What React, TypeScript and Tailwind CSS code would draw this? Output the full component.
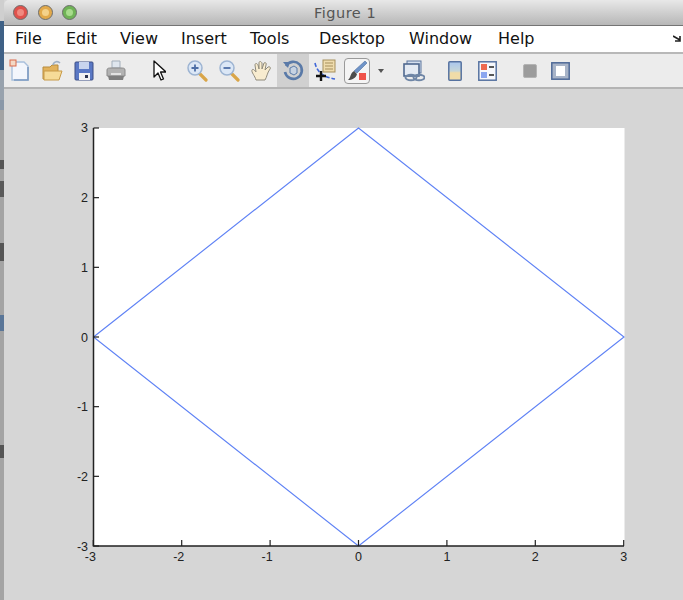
import type { ReactNode } from "react";

const menus = [
  { label: "File", w: "w-[51px]" },
  { label: "Edit", w: "w-[54px]" },
  { label: "View", w: "w-[61px]" },
  { label: "Insert", w: "w-[69px]" },
  { label: "Tools", w: "w-[69px]" },
  { label: "Desktop", w: "w-[90px]" },
  { label: "Window", w: "w-[89px]" },
  { label: "Help", w: "w-[60px]" },
];

const yTicks = [3, 2, 1, 0, -1, -2, -3];
const xTicks = [-3, -2, -1, 0, 1, 2, 3];

const yPos = (v: number) => 337 - v * 69.67;
const xPos = (v: number) => 358.5 + v * 88.4;

function Tool({ children, active }: { children: ReactNode; active?: boolean }) {
  return (
    <div className={`w-8 h-full flex items-center justify-center shrink-0 ${active ? "bg-[#d0d0d0]" : ""}`}>
      {children}
    </div>
  );
}

function Icon({ children }: { children: ReactNode }) {
  return (
    <svg width="22" height="24" viewBox="0 0 22 24" className="blur-[0.4px]">
      {children}
    </svg>
  );
}

function Light({ fill, core }: { fill: string; core: string }) {
  return (
    <div className={`w-[15px] h-[15px] rounded-full border border-[#6e6e6e] flex items-center justify-center ${fill}`}>
      <div className={`w-[7px] h-[7px] rounded-full ${core}`} />
    </div>
  );
}

export default function App() {
  return (
    <div className="w-[683px] h-[600px] flex overflow-hidden bg-[#d6d6d6] font-['DejaVu_Sans',sans-serif]">
      {/* sliver of the window behind */}
      <div className="w-[4px] h-full shrink-0 flex flex-col bg-[#a4a4a4]">
        <div className="h-[21px] bg-[#cfcfcf]" />
        <div className="h-[49px] bg-[#3f6186]" />
        <div className="h-[30px] bg-[#98a2ad]" />
        <div className="h-[10px] bg-[#8a98a8]" />
        <div className="h-[50px]" />
        <div className="h-[9px] bg-[#555]" />
        <div className="h-[12px]" />
        <div className="h-[16px] bg-[#5a5a5a]" />
        <div className="h-[46px]" />
        <div className="h-[18px] bg-[#555]" />
        <div className="h-[54px]" />
        <div className="h-[16px] bg-[#5a7698]" />
        <div className="h-[114px]" />
        <div className="h-[13px] bg-[#555]" />
      </div>

      <div className="flex-1 flex flex-col min-w-0">
        {/* title bar */}
        <div className="h-[26px] shrink-0 flex items-center relative rounded-tl-[5px] bg-gradient-to-b from-[#e8e8e8] to-[#b7b7b7] border-b border-[#747474]">
          <div className="flex items-center gap-[9.5px] ml-[9px]">
            <Light fill="bg-[#e0524c]" core="bg-[#f08a80]" />
            <Light fill="bg-[#e2a94a]" core="bg-[#f5d28a]" />
            <Light fill="bg-[#6fb356]" core="bg-[#a8dc8c]" />
          </div>
          <div className="absolute left-[310px] top-[3px] text-[14.5px] leading-[20px] tracking-[0.5px] text-[#555]">Figure 1</div>
        </div>

        {/* menu bar */}
        <div className="h-[26px] shrink-0 bg-white flex items-center pl-[11px] text-[16px] text-[#111] relative">
          {menus.map((m) => (
            <span key={m.label} className={`${m.w} shrink-0`}>{m.label}</span>
          ))}
          <svg width="10" height="8" viewBox="0 0 10 8" className="absolute right-0 top-[9px]">
            <path d="M0 1 L7 5 M7 1 V6 H2" stroke="#222" strokeWidth="1.6" fill="none" />
          </svg>
        </div>
        <div className="h-[2px] shrink-0 bg-[#b8b8b8]" />

        {/* toolbar */}
        <div className="h-[33px] shrink-0 bg-[#ececec] flex items-center">
          <Tool>
            <Icon>
              <path d="M3 3 H15 L19 7 V21 H3 Z" fill="#f3f6fc" stroke="#a9c0dc" strokeWidth="1.4" />
              <path d="M19 8 V21 H5" stroke="#7f9cc2" strokeWidth="1.6" fill="none" />
              <rect x="1" y="1" width="6" height="6" fill="#f3d9c6" stroke="#d9694a" />
            </Icon>
          </Tool>
          <Tool>
            <Icon>
              <path d="M2 8 H9 L11 6 H17 V20 H2 Z" fill="#e2b25c" stroke="#b78b3c" />
              <path d="M3 12 H21 L18 21 H3 Z" fill="#f6db98" stroke="#c79a48" />
              <path d="M12 6 C13 2 17 2 19 4" stroke="#9fb0c4" strokeWidth="1.6" fill="none" />
            </Icon>
          </Tool>
          <Tool>
            <Icon>
              <rect x="2" y="3" width="18" height="18" rx="1" fill="#5a78c4" stroke="#3c4f86" />
              <rect x="6" y="3" width="10" height="7" fill="#c8d4ee" />
              <rect x="6" y="14" width="11" height="7" fill="#f2f2f2" />
              <rect x="12" y="16" width="3" height="3" fill="#2c3550" />
            </Icon>
          </Tool>
          <Tool>
            <Icon>
              <path d="M7 2 H15 V9 H7 Z" fill="#dfe6ee" stroke="#a4afbb" />
              <path d="M2 11 C2 9 4 9 6 9 H16 C18 9 20 9 20 11 V17 H2 Z" fill="#b2b2b2" stroke="#8a8a8a" />
              <path d="M3 17 H19 L18 21 H4 Z" fill="#7e7e7e" />
              <rect x="6" y="14" width="10" height="2" fill="#e2e2e2" />
            </Icon>
          </Tool>
          <div className="w-[11px] shrink-0" />
          <Tool>
            <svg width="14" height="22" viewBox="0 0 14 22">
              <path d="M2 1 V17 L6 13 L9 20 L11.5 19 L8.5 12 H14 Z" fill="#fff" stroke="#111" strokeWidth="1.3" strokeLinejoin="round" />
            </svg>
          </Tool>
          <div className="w-[6px] shrink-0" />
          <Tool>
            <Icon>
              <path d="M13 14 L20 21" stroke="#d9a548" strokeWidth="3.2" strokeLinecap="round" />
              <circle cx="9" cy="9" r="7" fill="#dbe7f6" stroke="#9db4d2" strokeWidth="1.5" />
              <path d="M5.5 9 H12.5 M9 5.5 V12.5" stroke="#4d6ea6" strokeWidth="1.8" />
            </Icon>
          </Tool>
          <Tool>
            <Icon>
              <path d="M13 14 L20 21" stroke="#d9a548" strokeWidth="3.2" strokeLinecap="round" />
              <circle cx="9" cy="9" r="7" fill="#dbe7f6" stroke="#9db4d2" strokeWidth="1.5" />
              <path d="M5.5 9 H12.5" stroke="#4d6ea6" strokeWidth="1.8" />
            </Icon>
          </Tool>
          <Tool>
            <Icon>
              <path d="M6 21 C5 17 1 13 2 11 C3 9 5 12 6 13 L5 6 C5 4 7 4 8 6 L9 10 L9 4 C9 2 11 2 12 4 L12 10 L14 4 C15 3 17 4 16 6 L15 11 L18 8 C20 7 21 9 20 10 C17 14 17 18 15 21 Z" fill="#f8eccf" stroke="#8f8a7a" strokeWidth="1" />
            </Icon>
          </Tool>
          <Tool active>
            <Icon>
              <path d="M4 7 A8.5 8.5 0 1 1 3 13" fill="none" stroke="#5a7aa8" strokeWidth="2.6" />
              <path d="M1 3 L8 3 L6 9 Z" fill="#5a7aa8" />
              <path d="M8 9 L12 7 L15 9 V14 L12 16 L8 14 Z" fill="#c6d2e2" stroke="#5a7aa8" />
            </Icon>
          </Tool>
          <Tool>
            <Icon>
              <rect x="9" y="1" width="12" height="12" fill="#efdcae" stroke="#a58f5c" />
              <path d="M11 4 H19 M11 7 H19 M11 10 H19" stroke="#a58f5c" />
              <path d="M1 4 C3 13 9 18 21 20" stroke="#3f66d8" strokeWidth="1.6" strokeDasharray="4 2" fill="none" />
              <path d="M2 17 H12 M7 12 V22" stroke="#111" strokeWidth="2.4" />
            </Icon>
          </Tool>
          <Tool>
            <div className="w-[26px] h-[26px] rounded-[4px] border border-[#9a9a9a] bg-[#f4f4f4] flex items-center justify-center">
              <svg width="22" height="22" viewBox="0 0 22 22" className="blur-[0.4px]">
                <path d="M19 1 L21 3 L11 13 L8 11 Z" fill="#6f94c8" stroke="#4f6f9e" strokeWidth="0.6" />
                <path d="M8 11 L11 14 C10 18 6 20 2 20 C5 18 4 13 8 11 Z" fill="#4d4d4d" />
                <rect x="13" y="13" width="7" height="7" fill="#f0534a" />
              </svg>
            </div>
          </Tool>
          <div className="w-4 shrink-0 flex justify-center">
            <div className="w-0 h-0 border-x-[3px] border-x-transparent border-t-[4px] border-t-[#555]" />
          </div>
          <div className="w-[9px] shrink-0" />
          <Tool>
            <Icon>
              <rect x="4" y="2" width="14" height="12" fill="#d5dfee" stroke="#5c769e" />
              <rect x="1" y="5" width="15" height="12" fill="#e4eaf3" stroke="#4f688f" strokeWidth="1.6" />
              <ellipse cx="8" cy="18.5" rx="5.5" ry="2.8" fill="none" stroke="#6f86a6" strokeWidth="2" />
              <ellipse cx="16" cy="18.5" rx="5.5" ry="2.8" fill="none" stroke="#6f86a6" strokeWidth="2" />
            </Icon>
          </Tool>
          <div className="w-[9px] shrink-0" />
          <Tool>
            <svg width="14" height="20" viewBox="0 0 14 20" className="blur-[0.4px]">
              <defs>
                <linearGradient id="barFill" x1="0" y1="0" x2="0" y2="1">
                  <stop offset="0" stopColor="#a9c6ee" />
                  <stop offset="0.5" stopColor="#c6d6d8" />
                  <stop offset="0.6" stopColor="#f0dca8" />
                  <stop offset="1" stopColor="#f0dca8" />
                </linearGradient>
              </defs>
              <rect x="0.8" y="0.8" width="12.4" height="18.4" rx="1" fill="url(#barFill)" stroke="#5672a0" strokeWidth="1.5" />
            </svg>
          </Tool>
          <Tool>
            <svg width="19" height="20" viewBox="0 0 19 20" className="blur-[0.4px]">
              <rect x="0.8" y="0.8" width="17.4" height="18.4" fill="#f6f8fc" stroke="#5672a0" strokeWidth="1.5" />
              <rect x="3" y="3" width="6" height="6" fill="#ee6a50" />
              <rect x="3" y="11" width="6" height="6" fill="#8aa6f0" />
              <path d="M11 6 H16 M11 14 H16" stroke="#222" strokeWidth="1.6" />
            </svg>
          </Tool>
          <div className="w-[11px] shrink-0" />
          <Tool>
            <div className="w-[14px] h-[14px] rounded-[2px] bg-[#9c9c9c] border border-[#b4b4b4]" />
          </Tool>
          <Tool>
            <svg width="19" height="18" viewBox="0 0 19 18" className="blur-[0.4px] -ml-[3px]">
              <rect x="0.8" y="0.8" width="17.4" height="16.4" fill="#a8b4c8" stroke="#4f6a98" strokeWidth="1.5" />
              <rect x="5" y="4" width="9" height="10" fill="#fff" />
            </svg>
          </Tool>
        </div>
        <div className="h-[2px] shrink-0 bg-[#b4b4b4]" />

        {/* figure canvas, coords in the viewBox are page pixels */}
        <div className="flex-1 min-h-0">
          <svg width="679" height="511" viewBox="4 89 679 511" className="block">
            <rect x="93.5" y="128" width="531" height="418" fill="#fff" />
            <path d="M93.5 337 L358.5 128 L624 337 L358.5 546 Z" fill="none" stroke="#5f82f5" strokeWidth="1.15" />
            <path d="M93.5 128 V546 H624" fill="none" stroke="#222" strokeWidth="1.5" />
            {yTicks.map((v) => (
              <g key={v}>
                <path d={`M93.5 ${yPos(v)} H99`} stroke="#222" strokeWidth="1.2" />
                <text x="88" y={yPos(v) + 4.5} textAnchor="end" fontSize="12.5" fill="#222" fontFamily="'Liberation Sans', sans-serif">{v}</text>
              </g>
            ))}
            {xTicks.map((v) => (
              <g key={v}>
                <path d={`M${xPos(v)} 546 V540`} stroke="#222" strokeWidth="1.2" />
                <text x={xPos(v) - (v < 0 ? 3 : 0)} y="561" textAnchor="middle" fontSize="12.5" fill="#222" fontFamily="'Liberation Sans', sans-serif">{v}</text>
              </g>
            ))}
          </svg>
        </div>
      </div>
    </div>
  );
}
